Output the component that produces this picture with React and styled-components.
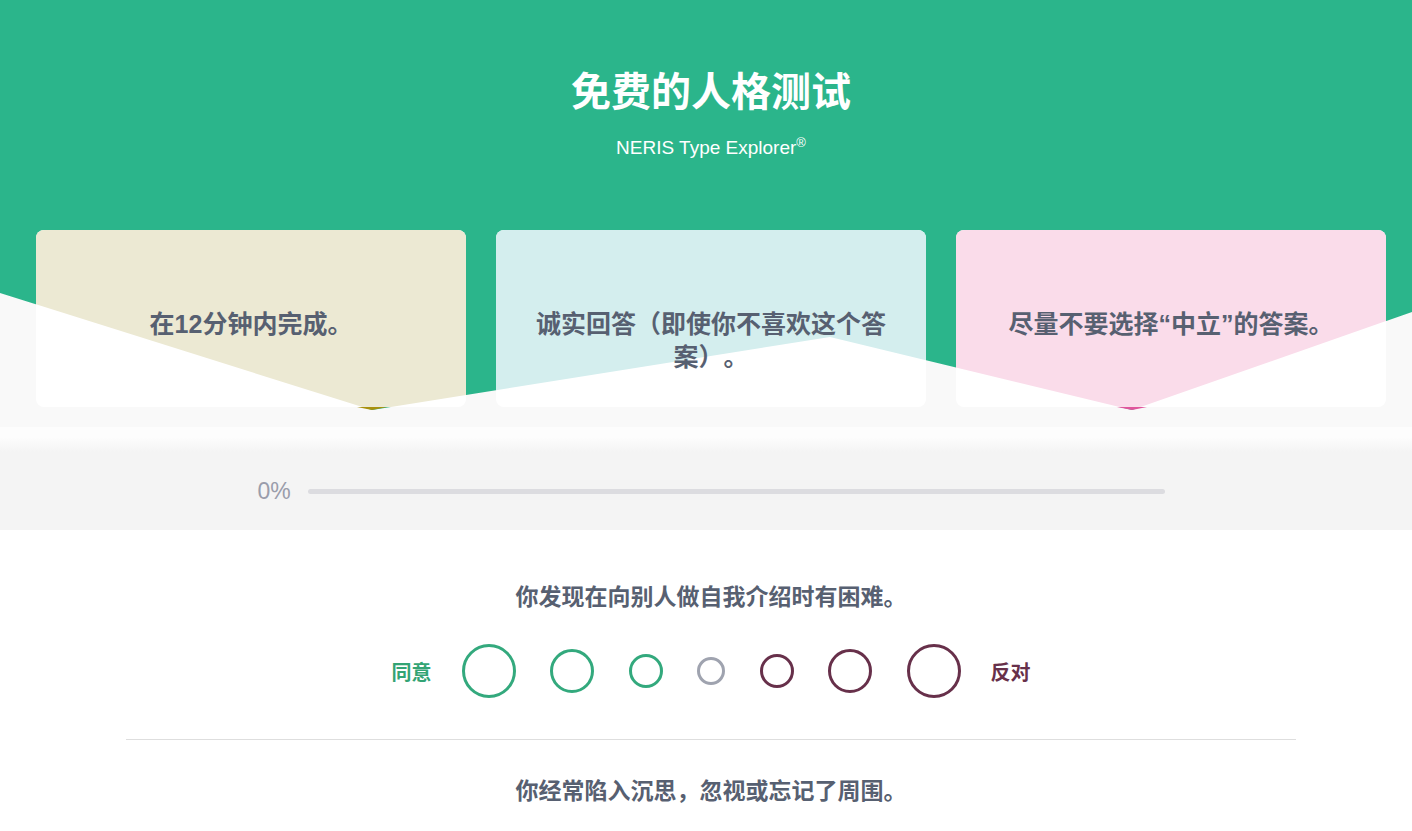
import React from 'react';
import styled, { createGlobalStyle } from 'styled-components';

const GlobalStyle = createGlobalStyle`
  html, body {
    margin: 0;
    padding: 0;
    background: #fff;
  }
  body {
    font-family: "Liberation Sans", "Noto Sans CJK SC", sans-serif;
    color: #576071;
    text-spacing-trim: space-all;
  }
  * {
    box-sizing: border-box;
  }
`;

// zigzag edge of the green header, in page coordinates
const EDGE = [
  [0, 293],
  [372, 410],
  [830, 337],
  [1132, 410],
  [1412, 312],
];

const CARD_TOP = 230;
const CARD_W = 430;

const edgeY = (x) => {
  for (let i = 0; i < EDGE.length - 1; i += 1) {
    const [x1, y1] = EDGE[i];
    const [x2, y2] = EDGE[i + 1];
    if (x >= x1 && x <= x2) return y1 + ((y2 - y1) * (x - x1)) / (x2 - x1);
  }
  return EDGE[EDGE.length - 1][1];
};

const cardClip = (left) => {
  const right = left + CARD_W;
  const pts = [
    [0, 0],
    [CARD_W, 0],
    [CARD_W, edgeY(right) - CARD_TOP],
  ];
  EDGE.filter(([x]) => x > left && x < right)
    .reverse()
    .forEach(([x, y]) => pts.push([x - left, y - CARD_TOP]));
  pts.push([0, edgeY(left) - CARD_TOP]);
  return `polygon(${pts.map(([x, y]) => `${x.toFixed(1)}px ${y.toFixed(1)}px`).join(', ')})`;
};

const Hero = styled.header`
  position: relative;
  background: #f9f9f9;
  padding: 65px 0 20px 10px;

  &::before {
    content: '';
    position: absolute;
    inset: 0;
    background: #2bb58b;
    clip-path: polygon(${['0px 0px', '1412px 0px', ...EDGE.slice().reverse().map(([x, y]) => `${x}px ${y}px`)].join(', ')});
  }
`;

const Title = styled.h1`
  position: relative;
  margin: 0;
  text-align: center;
  font-family: "Noto Sans CJK SC", sans-serif;
  font-size: 40px;
  line-height: 48px;
  font-weight: 700;
  color: #fff;
`;

const Subtitle = styled.p`
  position: relative;
  margin: 24px 0 0;
  text-align: center;
  font-size: 19px;
  line-height: 22px;
  color: #fff;

  sup {
    font-size: 13px;
    line-height: 0;
  }
`;

const CardRow = styled.div`
  position: relative;
  display: grid;
  grid-template-columns: repeat(3, ${CARD_W}px);
  gap: 30px;
  margin-top: 71px;
  padding: 0 16px 0 26px;
`;

const Card = styled.div`
  position: relative;
  height: 177px;
  padding: 78px 30px 0;
  background: #fff;
  border-radius: 8px;
  text-align: center;

  &::before {
    content: '';
    position: absolute;
    inset: 0;
    border-radius: 8px;
    background: ${({ $tint }) => $tint};
    clip-path: ${({ $clip }) => $clip};
  }
`;

const Tip = styled.span`
  position: absolute;
  top: 100%;
  left: ${({ $x }) => $x - 15}px;
  width: 30px;
  height: 3px;
  background: ${({ $color }) => $color};
  clip-path: polygon(0 0, 100% 0, 50% 100%);
`;

const CardText = styled.p`
  position: relative;
  margin: 0;
  font-size: 25px;
  line-height: 33px;
  font-weight: 700;
  color: #576071;
`;

const Fade = styled.div`
  height: 25px;
  background: linear-gradient(#fdfdfd 40%, #f4f4f4);
`;

const ProgressBand = styled.section`
  height: 78px;
  background: #f4f4f4;
  display: flex;
  align-items: center;
  justify-content: center;
  gap: 17px;
  padding-left: 10px;
`;

const Percent = styled.span`
  font-size: 23px;
  color: #9a9dab;
`;

const Track = styled.div`
  width: 857px;
  height: 5px;
  border-radius: 3px;
  background: #dcdce0;
`;

const Questions = styled.main`
  padding: 51px 0 0 10px;
  display: flex;
  flex-direction: column;
  align-items: center;
`;

const Question = styled.p`
  margin: ${({ $first }) => ($first ? '0' : '35px')} 0 0;
  font-family: "Noto Sans CJK SC", sans-serif;
  font-size: 23px;
  line-height: 28px;
  font-weight: 700;
  color: #576071;
  text-align: center;
`;

const Scale = styled.div`
  display: flex;
  align-items: center;
  gap: 34.5px;
  height: 54px;
  margin-top: 35px;
`;

const ScaleLabel = styled.span`
  font-family: "Noto Sans CJK SC", sans-serif;
  font-size: 20px;
  font-weight: 700;
  color: ${({ $color }) => $color};
  margin: ${({ $side }) => ($side === 'right' ? '0 0 0 -4.5px' : '0 -4.5px 0 0')};
`;

const Choice = styled.button`
  width: ${({ $size }) => $size}px;
  height: ${({ $size }) => $size}px;
  padding: 0;
  border-radius: 50%;
  border: 3px solid ${({ $color }) => $color};
  background: transparent;
  cursor: pointer;
`;

const Divider = styled.hr`
  width: 1170px;
  margin: 41px 0 0;
  border: 0;
  border-top: 1px solid #dedede;
`;

const GREEN = '#33a97d';
const PURPLE = '#67304a';
const GRAY = '#9fa3af';

const choices = [
  { size: 54, color: GREEN },
  { size: 44, color: GREEN },
  { size: 34, color: GREEN },
  { size: 28, color: GRAY },
  { size: 34, color: PURPLE },
  { size: 44, color: PURPLE },
  { size: 54, color: PURPLE },
];

const cards = [
  { left: 36, tint: '#ece9d3', tip: { x: 372, color: '#a8900e' }, text: '在12分钟内完成。' },
  { left: 496, tint: '#d4eeee', text: '诚实回答（即使你不喜欢这个答案）。' },
  { left: 956, tint: '#fadcea', tip: { x: 1132, color: '#e0559c' }, text: '尽量不要选择“中立”的答案。' },
];

const AnswerScale = () => (
  <Scale>
    <ScaleLabel $color="#33a474" $side="left">同意</ScaleLabel>
    {choices.map((c, i) => (
      <Choice key={i} $size={c.size} $color={c.color} aria-label={`option ${i + 1}`} />
    ))}
    <ScaleLabel $color="#67304a" $side="right">反对</ScaleLabel>
  </Scale>
);

export default function App() {
  return (
    <>
      <GlobalStyle />
      <Hero>
        <Title>免费的人格测试</Title>
        <Subtitle>
          NERIS Type Explorer<sup>®</sup>
        </Subtitle>
        <CardRow>
          {cards.map((card) => (
            <Card key={card.left} $tint={card.tint} $clip={cardClip(card.left)}>
              {card.tip && <Tip $x={card.tip.x - card.left} $color={card.tip.color} />}
              <CardText>{card.text}</CardText>
            </Card>
          ))}
        </CardRow>
      </Hero>
      <Fade />
      <ProgressBand>
        <Percent>0%</Percent>
        <Track />
      </ProgressBand>
      <Questions>
        <Question $first>你发现在向别人做自我介绍时有困难。</Question>
        <AnswerScale />
        <Divider />
        <Question>你经常陷入沉思，忽视或忘记了周围。</Question>
        <AnswerScale />
      </Questions>
    </>
  );
}
